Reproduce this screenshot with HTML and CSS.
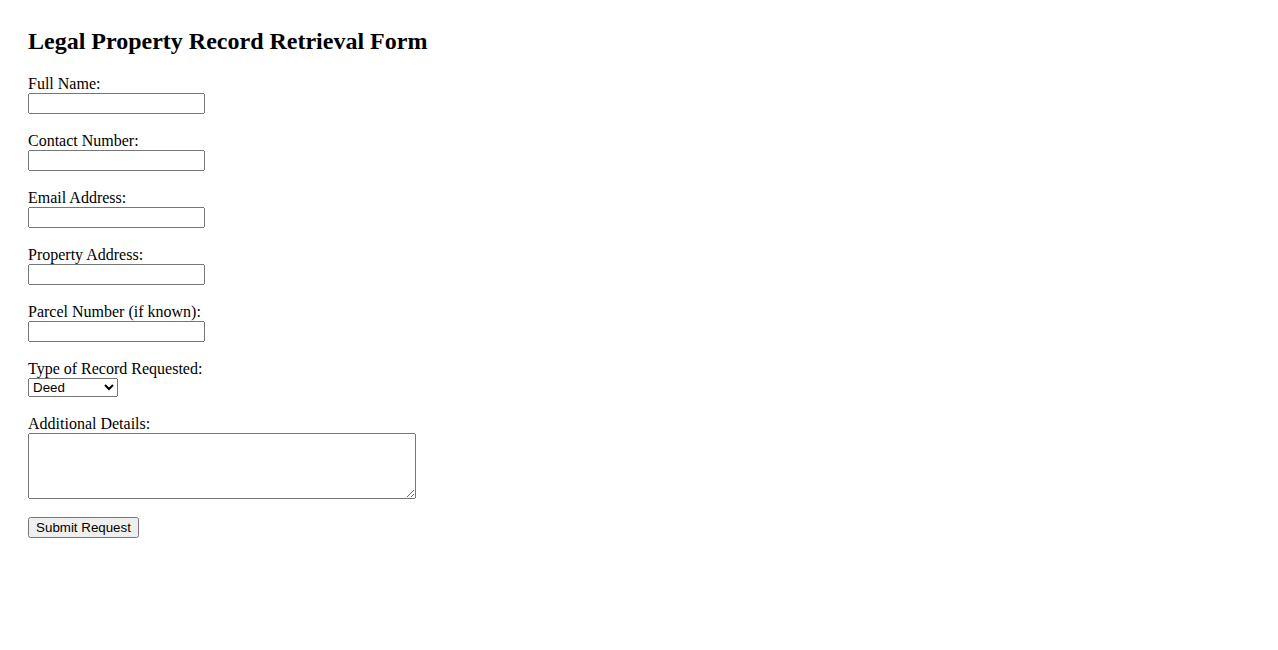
FILE: index.html
```html
<!DOCTYPE html>
<html lang="en">
<head>
    <meta charset="UTF-8">
    <meta name="viewport" content="width=device-width, initial-scale=1.0">
    <title>Legal Property Record Retrieval Form</title>
    <link rel="stylesheet" href="styles.css">
</head>
<body>
    <h2>Legal Property Record Retrieval Form</h2>
    <form class="record-form">
        <div class="field">
            <label for="fullName">Full Name:</label>
            <input type="text" id="fullName" name="fullName">
        </div>
        <div class="field">
            <label for="contactNumber">Contact Number:</label>
            <input type="text" id="contactNumber" name="contactNumber">
        </div>
        <div class="field">
            <label for="email">Email Address:</label>
            <input type="text" id="email" name="email">
        </div>
        <div class="field">
            <label for="propertyAddress">Property Address:</label>
            <input type="text" id="propertyAddress" name="propertyAddress">
        </div>
        <div class="field">
            <label for="parcelNumber">Parcel Number (if known):</label>
            <input type="text" id="parcelNumber" name="parcelNumber">
        </div>
        <div class="field">
            <label for="recordType">Type of Record Requested:</label>
            <select id="recordType" name="recordType">
                <option>Deed</option>
                <option>Mortgage</option>
                <option>Lien</option>
                <option>Title</option>
                <option>Other</option>
            </select>
        </div>
        <div class="field">
            <label for="details">Additional Details:</label>
            <textarea id="details" name="details"></textarea>
        </div>
        <button type="submit">Submit Request</button>
    </form>
</body>
</html>
```

FILE: styles.css
```css
body {
    font-family: "Liberation Serif", "Times New Roman", serif;
    font-size: 16px;
    margin: 0;
    padding: 28px;
    color: #000;
}
h2 {
    font-size: 24px;
    font-weight: bold;
    margin: 0 0 20px;
}
.field {
    margin-bottom: 18px;
}
label {
    display: block;
    line-height: 18px;
}
input[type="text"] {
    display: block;
    box-sizing: border-box;
    width: 177px;
    height: 21px;
    margin: 0;
    font-family: "Liberation Sans", Arial, sans-serif;
    font-size: 13.33px;
}
select {
    display: block;
    box-sizing: border-box;
    width: 90px;
    height: 19px;
    margin: 0;
    font-family: "Liberation Sans", Arial, sans-serif;
    font-size: 13.33px;
}
textarea {
    display: block;
    box-sizing: border-box;
    width: 388px;
    height: 66px;
    margin: 0;
    font-family: "Liberation Mono", monospace;
    font-size: 13.33px;
}
button {
    display: block;
    box-sizing: border-box;
    width: 111px;
    height: 21px;
    margin: 0;
    padding: 1px 6px;
    font-family: "Liberation Sans", Arial, sans-serif;
    font-size: 13.33px;
}
```
